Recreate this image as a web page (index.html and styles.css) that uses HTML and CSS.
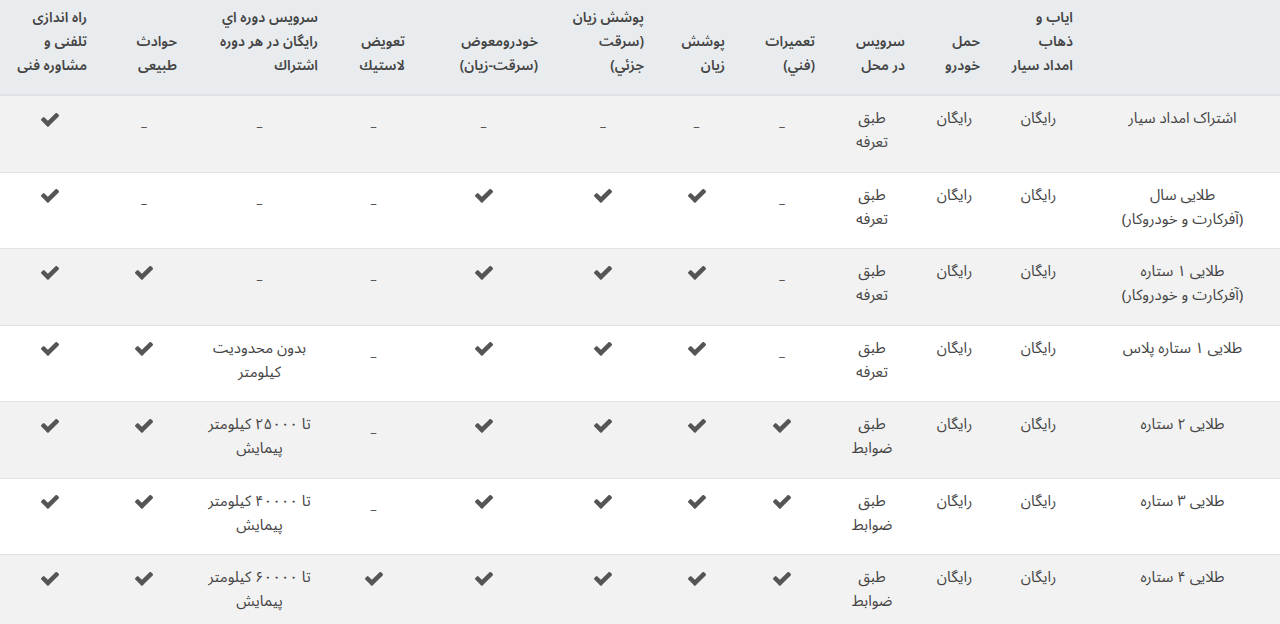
FILE: index.html
```html
<!DOCTYPE html>
<html lang="fa" dir="rtl">
<head>
<meta charset="utf-8">
<title>مقایسه اشتراک ها</title>
<link rel="stylesheet" href="styles.css">
</head>
<body>
<svg class="defs" width="0" height="0" aria-hidden="true">
  <symbol id="chk" viewBox="121 362 1550 1164">
    <path d="M1671 566q0 40-28 68l-724 724-136 136q-28 28-68 28t-68-28l-136-136-362-362q-28-28-28-68t28-68l136-136q28-28 68-28t68 28l294 295 656-657q28-28 68-28t68 28l136 136q28 28 28 68z"/>
  </symbol>
</svg>
<table class="plans">
  <colgroup>
    <col class="c-plan"><col class="c-ayab"><col class="c-haml"><col class="c-serv"><col class="c-tamir"><col class="c-posh"><col class="c-sarqat"><col class="c-moavez"><col class="c-lastik"><col class="c-doreh"><col class="c-havades"><col class="c-rah">
  </colgroup>
  <thead>
    <tr>
      <th></th>
      <th>ایاب و<br>ذهاب<br>امداد سیار</th>
      <th>حمل<br>خودرو</th>
      <th>سرویس<br>در محل</th>
      <th>تعمیرات<br>(فني)</th>
      <th>پوشش<br>زیان</th>
      <th>پوشش زیان<br>(سرقت<br>جزئي)</th>
      <th>خودرومعوض<br>(سرقت-زیان)</th>
      <th>تعویض<br>لاستيك</th>
      <th>سرویس دوره اي<br>رایگان در هر دوره<br>اشتراك</th>
      <th>حوادث<br>طبیعی</th>
      <th>راه اندازی<br>تلفنی و<br>مشاوره فنی</th>
    </tr>
  </thead>
  <tbody>
    <tr>
      <td>اشتراک امداد سیار</td><td>رایگان</td><td>رایگان</td><td>طبق<br>تعرفه</td>
      <td><span class="dash">–</span></td><td><span class="dash">–</span></td><td><span class="dash">–</span></td><td><span class="dash">–</span></td><td><span class="dash">–</span></td><td><span class="dash">–</span></td><td><span class="dash">–</span></td>
      <td><svg class="check"><use href="#chk"/></svg></td>
    </tr>
    <tr>
      <td>طلایی سال<br>(آفرکارت و خودروکار)</td><td>رایگان</td><td>رایگان</td><td>طبق<br>تعرفه</td>
      <td><span class="dash">–</span></td>
      <td><svg class="check"><use href="#chk"/></svg></td><td><svg class="check"><use href="#chk"/></svg></td><td><svg class="check"><use href="#chk"/></svg></td>
      <td><span class="dash">–</span></td><td><span class="dash">–</span></td><td><span class="dash">–</span></td>
      <td><svg class="check"><use href="#chk"/></svg></td>
    </tr>
    <tr>
      <td>طلایی ۱ ستاره<br>(آفرکارت و خودروکار)</td><td>رایگان</td><td>رایگان</td><td>طبق<br>تعرفه</td>
      <td><span class="dash">–</span></td>
      <td><svg class="check"><use href="#chk"/></svg></td><td><svg class="check"><use href="#chk"/></svg></td><td><svg class="check"><use href="#chk"/></svg></td>
      <td><span class="dash">–</span></td><td><span class="dash">–</span></td>
      <td><svg class="check"><use href="#chk"/></svg></td><td><svg class="check"><use href="#chk"/></svg></td>
    </tr>
    <tr>
      <td>طلایی ۱ ستاره پلاس</td><td>رایگان</td><td>رایگان</td><td>طبق<br>تعرفه</td>
      <td><span class="dash">–</span></td>
      <td><svg class="check"><use href="#chk"/></svg></td><td><svg class="check"><use href="#chk"/></svg></td><td><svg class="check"><use href="#chk"/></svg></td>
      <td><span class="dash">–</span></td>
      <td>بدون محدودیت<br>کیلومتر</td>
      <td><svg class="check"><use href="#chk"/></svg></td><td><svg class="check"><use href="#chk"/></svg></td>
    </tr>
    <tr>
      <td>طلایی ۲ ستاره</td><td>رایگان</td><td>رایگان</td><td>طبق<br>ضوابط</td>
      <td><svg class="check"><use href="#chk"/></svg></td><td><svg class="check"><use href="#chk"/></svg></td><td><svg class="check"><use href="#chk"/></svg></td><td><svg class="check"><use href="#chk"/></svg></td>
      <td><span class="dash">–</span></td>
      <td>تا ۲۵۰۰۰ کیلومتر<br>پیمایش</td>
      <td><svg class="check"><use href="#chk"/></svg></td><td><svg class="check"><use href="#chk"/></svg></td>
    </tr>
    <tr>
      <td>طلایی ۳ ستاره</td><td>رایگان</td><td>رایگان</td><td>طبق<br>ضوابط</td>
      <td><svg class="check"><use href="#chk"/></svg></td><td><svg class="check"><use href="#chk"/></svg></td><td><svg class="check"><use href="#chk"/></svg></td><td><svg class="check"><use href="#chk"/></svg></td>
      <td><span class="dash">–</span></td>
      <td>تا ۴۰۰۰۰ کیلومتر<br>پیمایش</td>
      <td><svg class="check"><use href="#chk"/></svg></td><td><svg class="check"><use href="#chk"/></svg></td>
    </tr>
    <tr>
      <td>طلایی ۴ ستاره</td><td>رایگان</td><td>رایگان</td><td>طبق<br>ضوابط</td>
      <td><svg class="check"><use href="#chk"/></svg></td><td><svg class="check"><use href="#chk"/></svg></td><td><svg class="check"><use href="#chk"/></svg></td><td><svg class="check"><use href="#chk"/></svg></td>
      <td><svg class="check"><use href="#chk"/></svg></td>
      <td>تا ۶۰۰۰۰ کیلومتر<br>پیمایش</td>
      <td><svg class="check"><use href="#chk"/></svg></td><td><svg class="check"><use href="#chk"/></svg></td>
    </tr>
  </tbody>
</table>
</body>
</html>
```
FILE: styles.css
```css
html, body {
  margin: 0;
  padding: 0;
  background: #ffffff;
}
body {
  font-family: "Noto Sans Arabic", "Noto Naskh Arabic", "DejaVu Sans", sans-serif;
  color: #444444;
  font-size: 15px;
}
.defs {
  position: absolute;
  width: 0;
  height: 0;
}
.plans {
  width: 1280px;
  table-layout: fixed;
  border-collapse: collapse;
}
.c-plan { width: 195px; }
.c-ayab { width: 93px; }
.c-haml { width: 75px; }
.c-serv { width: 90px; }
.c-tamir { width: 90px; }
.c-posh { width: 81px; }
.c-sarqat { width: 106px; }
.c-moavez { width: 133px; }
.c-lastik { width: 87px; }
.c-doreh { width: 141px; }
.c-havades { width: 90px; }
.c-rah { width: 99px; }

.plans thead th {
  background: #e9ecef;
  color: #444444;
  font-weight: 600;
  font-size: 14px;
  line-height: 24px;
  text-align: right;
  vertical-align: bottom;
  padding: 6px 12px 16px 4px;
  border-bottom: 2px solid #dee2e6;
  white-space: nowrap;
}
.plans tbody td {
  text-align: center;
  vertical-align: top;
  line-height: 24px;
  padding: 10px 4px 17.5px;
  border-top: 1px solid #e3e3e3;
  white-space: nowrap;
}
.plans tbody tr:nth-child(odd) td {
  background: #f2f2f2;
}
.plans tbody tr:nth-child(even) td {
  background: #ffffff;
}
.check {
  display: inline-block;
  width: 18px;
  height: 14px;
  fill: #555555;
  vertical-align: middle;
  position: relative;
  top: 1px;
}
.dash {
  color: #555555;
  font-size: 13px;
  position: relative;
  top: 8px;
}
```
